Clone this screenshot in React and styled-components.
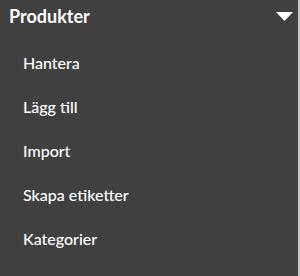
import React from 'react';
import styled, { createGlobalStyle } from 'styled-components';

const GlobalStyle = createGlobalStyle`
  html, body {
    margin: 0;
    padding: 0;
    background: #404040;
  }
  body {
    font-family: Lato, "Noto Sans", sans-serif;
  }
`;

const items = ['Hantera', 'Lägg till', 'Import', 'Skapa etiketter', 'Kategorier'];

function Caret() {
  return (
    <svg width="17" height="9" viewBox="0 0 17 9">
      <path d="M0 0 H17 L8.5 9 Z" fill="#ffffff" />
    </svg>
  );
}

export default function App() {
  return (
    <>
      <GlobalStyle />
      <Menu>
        <Header>
          <Title>Produkter</Title>
          <Caret />
        </Header>
        <List>
          {items.map((label) => (
            <Item key={label}>{label}</Item>
          ))}
        </List>
      </Menu>
    </>
  );
}

const Menu = styled.nav`
  width: 298px;
  height: 276px;
  background: #404040;
  border-right: 2px solid #c4c4c4;
`;

const Header = styled.div`
  display: flex;
  align-items: center;
  justify-content: space-between;
  height: 32px;
  padding: 0 5px 0 9px;
`;

const Title = styled.span`
  color: #ffffff;
  font-size: 18px;
  font-weight: 700;
  line-height: 32px;
`;

const List = styled.ul`
  list-style: none;
  margin: 0;
  padding: 9px 0 0;
`;

const Item = styled.li`
  color: #ffffff;
  font-size: 16px;
  font-weight: 500;
  line-height: 44px;
  padding-left: 23px;
`;
